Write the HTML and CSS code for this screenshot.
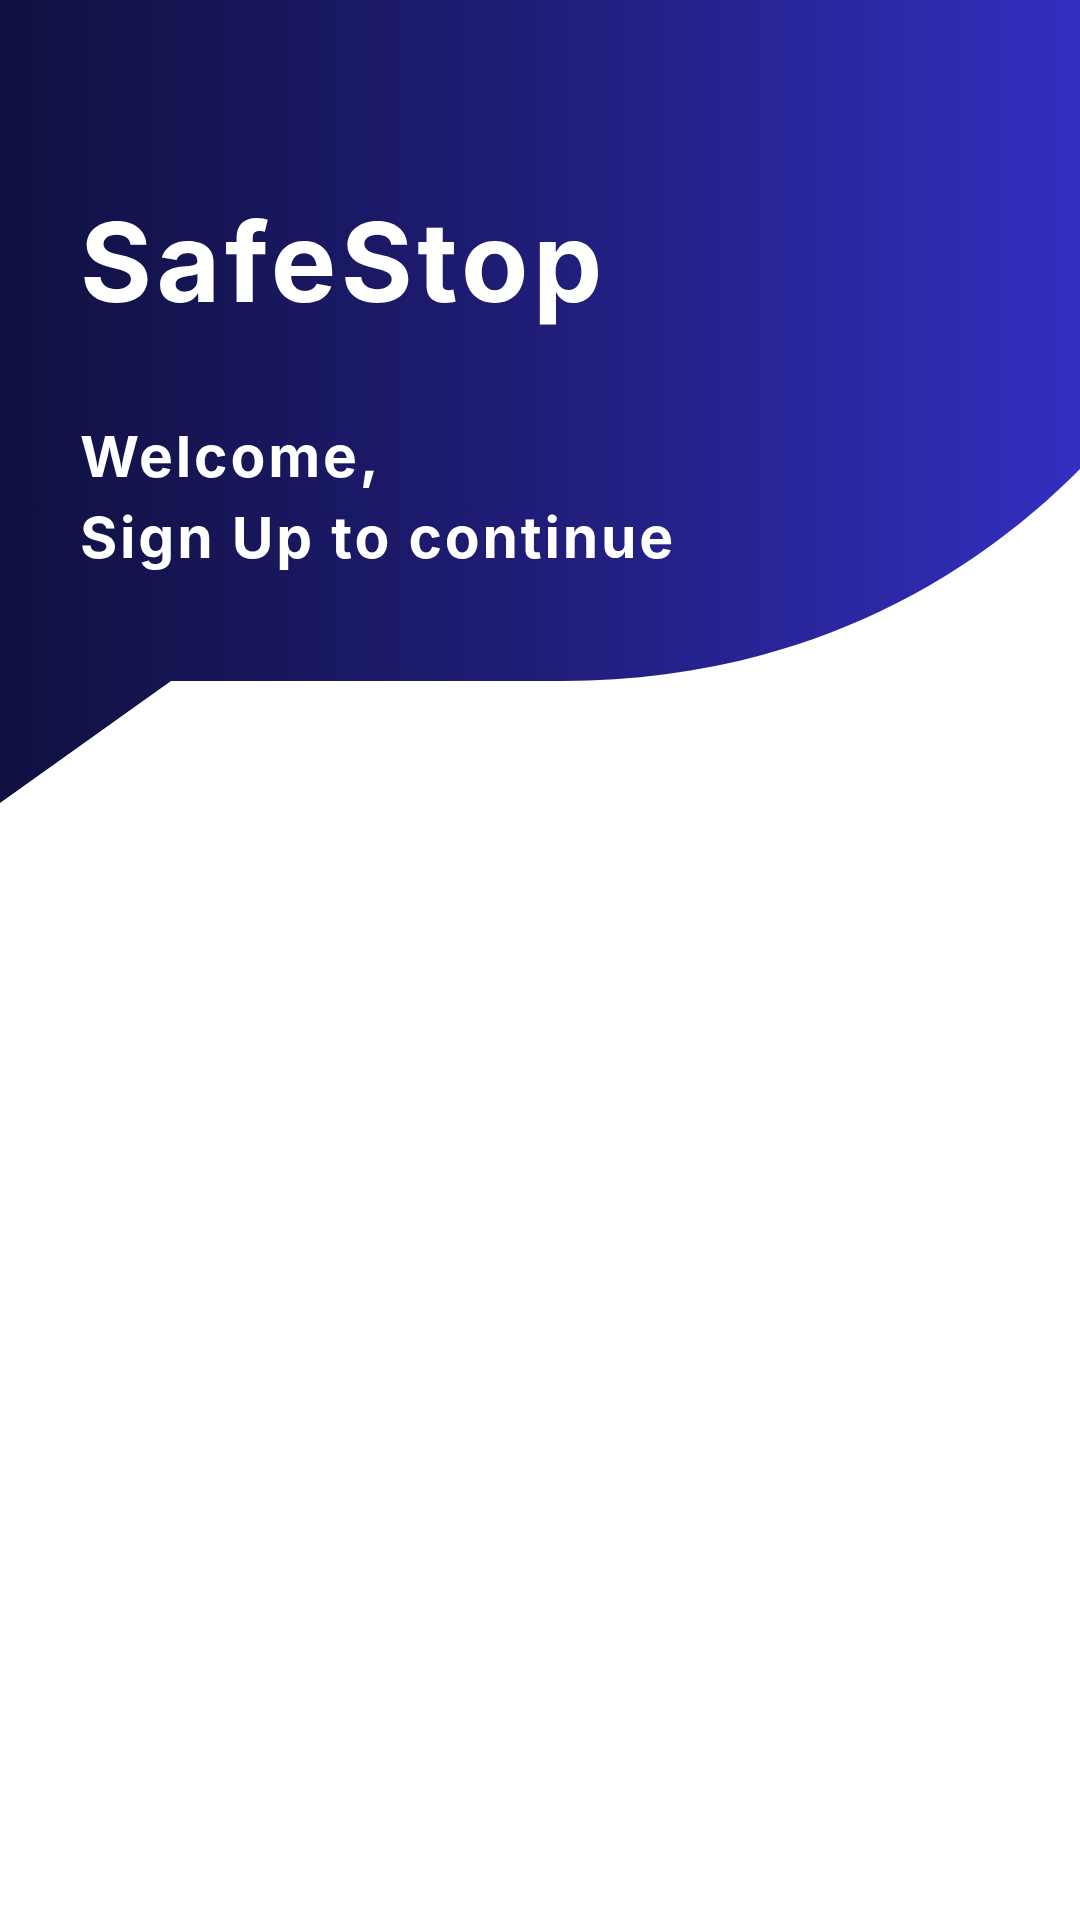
FILE: index.html
```html
<!DOCTYPE html>
<html lang="en">
<head>
    <meta charset="UTF-8">
    <meta name="viewport" content="width=device-width, initial-scale=1.0">
    <title>SafeStop - Sign Up</title>
    <link rel="stylesheet" href="styles.css">
</head>
<body>
    <header class="hero">
        <h1 class="brand">SafeStop</h1>
        <p class="greeting">Welcome,<br>Sign Up to continue</p>
    </header>
    <main class="content"></main>
</body>
</html>
```

FILE: styles.css
```css
:root {
    --hero-dark: #0f1140;
    --hero-mid: #201d78;
    --hero-light: #332fc0;
}

* {
    box-sizing: border-box;
    margin: 0;
    padding: 0;
}

body {
    background: #ffffff;
    font-family: Inter, 'Noto Sans', sans-serif;
    color: #ffffff;
    width: 1080px;
    height: 1920px;
    overflow: hidden;
}

.hero {
    height: 803px;
    padding: 207px 0 0 80px;
    background: linear-gradient(90deg, var(--hero-dark) 0%, var(--hero-mid) 50%, var(--hero-light) 100%);
    clip-path: path('M0 0 H1080 V469 C940 610 760 681 563 681 H171 L0 803 Z');
}

.brand {
    font-size: 110px;
    font-weight: 700;
    line-height: 1;
    letter-spacing: 4.5px;
}

.greeting {
    margin-top: 99px;
    font-size: 57px;
    font-weight: 700;
    line-height: 81px;
    letter-spacing: 2.8px;
}
```
